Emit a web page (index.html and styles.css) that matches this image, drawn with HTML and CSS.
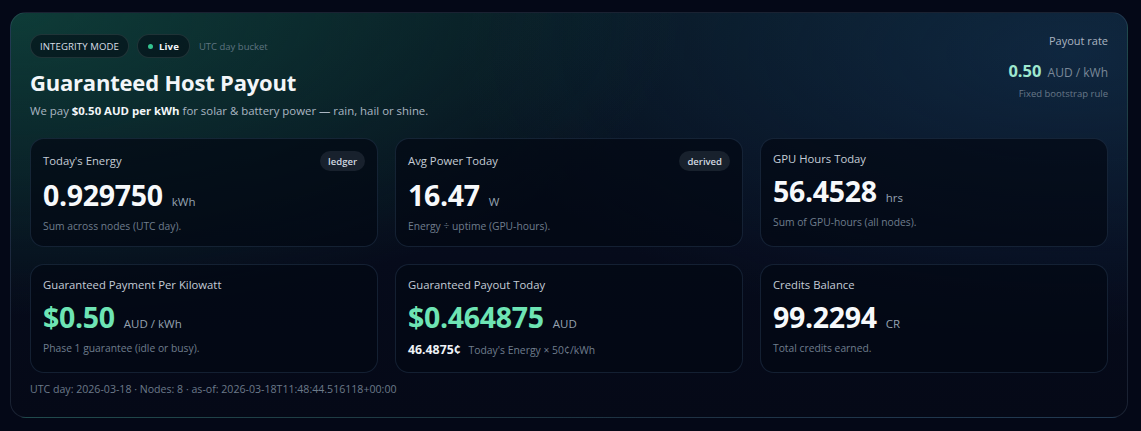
FILE: index.html
```html
<!DOCTYPE html>
<html lang="en">
<head>
<meta charset="utf-8">
<title>Guaranteed Host Payout</title>
<link rel="stylesheet" href="styles.css">
</head>
<body>
<section class="panel">
  <header class="head">
    <div class="head-left">
      <div class="chips">
        <span class="chip">INTEGRITY MODE</span>
        <span class="chip chip-live"><span class="dot"></span>Live</span>
        <span class="chip-note">UTC day bucket</span>
      </div>
      <h1 class="title">Guaranteed Host Payout</h1>
      <p class="sub">We pay <strong>$0.50 AUD per kWh</strong> for solar &amp; battery power — rain, hail or shine.</p>
    </div>
    <div class="head-right">
      <div class="rate-label">Payout rate</div>
      <div class="rate"><span class="rate-num">0.50</span> <span class="rate-unit">AUD / kWh</span></div>
      <div class="rate-note">Fixed bootstrap rule</div>
    </div>
  </header>

  <div class="grid">
    <div class="card">
      <div class="card-head"><span class="card-title">Today's Energy</span><span class="badge">ledger</span></div>
      <div class="value"><span class="num">0.929750</span><span class="unit">kWh</span></div>
      <div class="desc">Sum across nodes (UTC day).</div>
    </div>
    <div class="card">
      <div class="card-head"><span class="card-title">Avg Power Today</span><span class="badge">derived</span></div>
      <div class="value"><span class="num">16.47</span><span class="unit">W</span></div>
      <div class="desc">Energy ÷ uptime (GPU-hours).</div>
    </div>
    <div class="card">
      <div class="card-head"><span class="card-title">GPU Hours Today</span></div>
      <div class="value"><span class="num">56.4528</span><span class="unit">hrs</span></div>
      <div class="desc">Sum of GPU-hours (all nodes).</div>
    </div>
    <div class="card">
      <div class="card-head"><span class="card-title">Guaranteed Payment Per Kilowatt</span></div>
      <div class="value"><span class="num green">$0.50</span><span class="unit">AUD / kWh</span></div>
      <div class="desc">Phase 1 guarantee (idle or busy).</div>
    </div>
    <div class="card">
      <div class="card-head"><span class="card-title">Guaranteed Payout Today</span></div>
      <div class="value"><span class="num green">$0.464875</span><span class="unit">AUD</span></div>
      <div class="desc desc-calc"><strong class="cents">46.4875¢</strong> Today's Energy × 50¢/kWh</div>
    </div>
    <div class="card">
      <div class="card-head"><span class="card-title">Credits Balance</span></div>
      <div class="value"><span class="num">99.2294</span><span class="unit">CR</span></div>
      <div class="desc">Total credits earned.</div>
    </div>
  </div>

  <footer class="foot">UTC day: 2026-03-18 · Nodes: 8 · as-of: 2026-03-18T11:48:44.516118+00:00</footer>
</section>
</body>
</html>
```

FILE: styles.css
```css
* { box-sizing: border-box; }
html, body { height: 100%; }
body {
  margin: 0;
  background: #040817;
  font-family: "Open Sans", "Noto Sans", sans-serif;
  color: #e6edf5;
}
.panel {
  margin: 12px 13px 0 10px;
  height: 406px;
  border: 1px solid rgba(120, 150, 180, 0.18);
  border-radius: 16px;
  padding: 21px 19px 0 19px;
  background:
    radial-gradient(ellipse 60% 75% at 0% 0%, rgba(18, 84, 70, 0.6), transparent 100%),
    radial-gradient(ellipse 55% 70% at 95% 10%, rgba(24, 60, 100, 0.45), transparent 100%),
    linear-gradient(180deg, #081722 0%, #060b1b 60%, #050917 100%);
}
.head {
  display: flex;
  justify-content: space-between;
  align-items: flex-start;
}
.chips {
  display: flex;
  align-items: center;
  gap: 8px;
}
.chip {
  display: inline-flex;
  align-items: center;
  height: 24px;
  padding: 0 9px;
  border-radius: 999px;
  background: rgba(4, 14, 22, 0.6);
  border: 1px solid rgba(255, 255, 255, 0.1);
  font-size: 9.6px;
  font-weight: 500;
  color: #d7dee6;
  letter-spacing: 0.1px;
}
.chip-live { gap: 6px; padding: 0 10px 0 10px; font-weight: 700; color: #f2f5f8; }
.dot {
  width: 5px; height: 5px; border-radius: 50%;
  background: #34c38f;
}
.chip-note { font-size: 9.5px; color: #5f7480; margin-left: 1px; }
.title {
  margin: 9px 0 0 0;
  font-size: 22px;
  line-height: 31px;
  font-weight: 700;
  color: #f3f6f9;
  letter-spacing: -0.2px;
}
.sub {
  margin: 5px 0 0 0;
  font-size: 11.4px;
  line-height: 16px;
  color: #aab6c2;
}
.sub strong { color: #f3f6f9; font-weight: 700; }
.head-right {
  text-align: right;
}
.rate-label { font-size: 11px; line-height: 14px; color: #aab4c0; }
.rate { margin-top: 12px; line-height: 22px; }
.rate-num { font-size: 16.5px; font-weight: 700; color: #9ee8cf; }
.rate-unit { font-size: 12px; color: #7a8898; margin-left: 2px; }
.rate-note { margin-top: 3px; font-size: 9.5px; color: #687888; }

.grid {
  margin-top: 19px;
  display: grid;
  grid-template-columns: repeat(3, 1fr);
  gap: 17px;
}
.card {
  height: 109px;
  border: 1px solid rgba(80, 120, 160, 0.22);
  border-radius: 14px;
  padding: 12px 12px 0 12px;
  background: rgba(3, 8, 20, 0.72);
}
.card-head {
  display: flex;
  justify-content: space-between;
  align-items: center;
}
.card-title { font-size: 11.3px; line-height: 16px; color: #c4ccd6; }
.badge {
  display: inline-flex;
  align-items: center;
  height: 20px;
  padding: 0 8px;
  border-radius: 999px;
  background: #18212d;
  font-size: 9.5px;
  font-weight: 600;
  color: #d2d9e1;
}
.value {
  margin-top: 7px;
  display: flex;
  align-items: baseline;
  gap: 9px;
  line-height: 34px;
}
.num { font-size: 28.5px; font-weight: 700; color: #f7f9fb; letter-spacing: -0.3px; }
.num.green { color: #6ee4b4; }
.unit { font-size: 11.5px; color: #95a2b0; }
.desc { margin-top: 0; font-size: 10.3px; line-height: 14px; color: #6f7d8d; }
.desc-calc { margin-top: 2px; font-size: 10.4px; }
.cents { font-size: 12.3px; font-weight: 700; color: #eef2f6; margin-right: 5px; }
.foot {
  margin-top: 9px;
  font-size: 10.6px;
  line-height: 14px;
  color: #6c7a8a;
}
```
